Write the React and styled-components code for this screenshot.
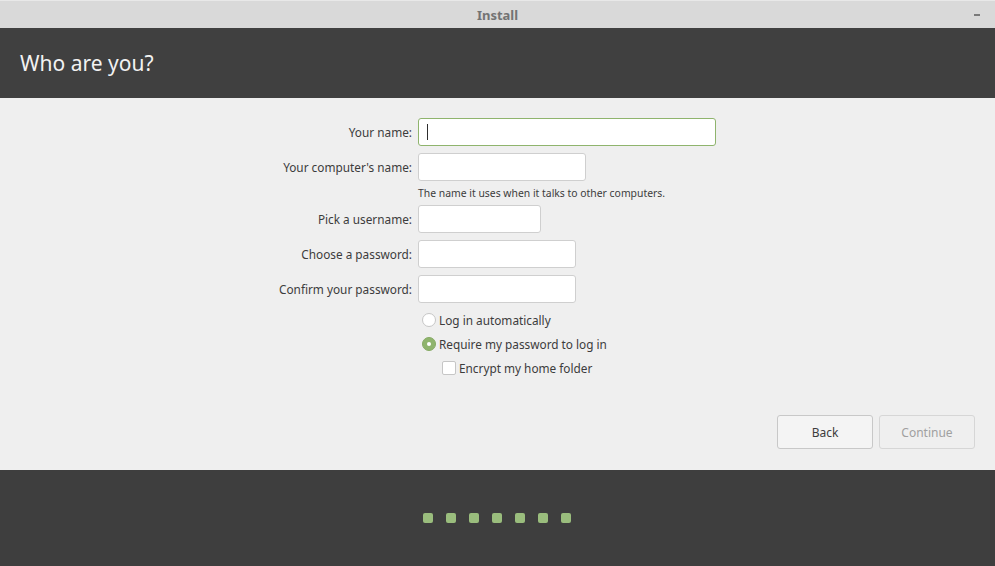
import React from "react";
import styled, { createGlobalStyle } from "styled-components";

const GlobalStyle = createGlobalStyle`
  html, body {
    margin: 0;
    padding: 0;
    background: #efefef;
    font-family: "Noto Sans", "DejaVu Sans", sans-serif;
  }
`;

const Window = styled.div`
  width: 995px;
  height: 566px;
  display: flex;
  flex-direction: column;
  overflow: hidden;
`;

const TitleBar = styled.div`
  height: 28px;
  flex: none;
  background: #d9d9d9;
  border-top: 1px solid #e8e8e8;
  box-sizing: border-box;
  display: flex;
  align-items: center;
  justify-content: center;
  position: relative;
  color: #737373;
  font-weight: 700;
  font-size: 13px;
`;

const Minimize = styled.span`
  position: absolute;
  right: 15px;
  top: 13px;
  width: 6px;
  height: 2px;
  background: #7a7a7a;
`;

const Header = styled.div`
  height: 70px;
  flex: none;
  background: #404040;
  display: flex;
  align-items: center;
  padding: 0 20px;
  color: #f2f2f2;
  font-size: 21px;
`;

const Body = styled.div`
  flex: 1;
  background: #efefef;
  display: flex;
  flex-direction: column;
  justify-content: space-between;
  padding: 20px 20px 21px 0;
`;

const Form = styled.div`
  display: grid;
  grid-template-columns: 412px auto;
  column-gap: 6px;
  row-gap: 7px;
  align-items: center;
  justify-items: start;
`;

const Label = styled.label`
  justify-self: end;
  font-size: 11.8px;
  color: #3c3c3c;
`;

const Input = styled.div`
  box-sizing: border-box;
  height: 28px;
  width: ${({ w }) => w}px;
  background: #fff;
  border: 1px solid ${({ focused }) => (focused ? "#8fb46d" : "#cfcfcf")};
  border-radius: 3px;
  display: flex;
  align-items: center;
  padding-left: 8px;
`;

const Caret = styled.span`
  width: 1px;
  height: 16px;
  background: #2e2e2e;
`;

const Hint = styled.div`
  grid-column: 2;
  font-size: 10.4px;
  line-height: 16px;
  margin: -3px 0;
  color: #3c3c3c;
`;

const Options = styled.div`
  grid-column: 2;
  display: flex;
  flex-direction: column;
  gap: 4px;
`;

const Option = styled.div`
  height: 20px;
  display: flex;
  align-items: center;
  gap: 3px;
  padding-left: ${({ indent }) => (indent ? 24 : 4)}px;
  font-size: 11.8px;
  color: #3c3c3c;
`;

const Radio = styled.span`
  box-sizing: border-box;
  width: 14px;
  height: 14px;
  border-radius: 50%;
  background: ${({ checked }) => (checked ? "#8fb46d" : "#fff")};
  border: 1px solid ${({ checked }) => (checked ? "#85aa63" : "#c6c6c6")};
  display: flex;
  align-items: center;
  justify-content: center;
  &::after {
    content: "";
    display: ${({ checked }) => (checked ? "block" : "none")};
    width: 4px;
    height: 4px;
    border-radius: 50%;
    background: #fff;
  }
`;

const Checkbox = styled.span`
  box-sizing: border-box;
  width: 14px;
  height: 14px;
  border-radius: 2px;
  background: #fff;
  border: 1px solid #c6c6c6;
`;

const Buttons = styled.div`
  display: flex;
  justify-content: flex-end;
  gap: 6px;
`;

const Button = styled.button`
  box-sizing: border-box;
  width: 96px;
  height: 34px;
  border: 1px solid ${({ disabled }) => (disabled ? "#d6d6d6" : "#c8c8c8")};
  border-radius: 3px;
  background: ${({ disabled }) => (disabled ? "#efefef" : "#f4f4f4")};
  color: ${({ disabled }) => (disabled ? "#a0a0a0" : "#3c3c3c")};
  font-family: "Noto Sans", sans-serif;
  font-size: 12px;
  padding: 0;
`;

const Footer = styled.div`
  height: 96px;
  flex: none;
  background: #3e3e3e;
  display: flex;
  align-items: center;
  justify-content: center;
  gap: 13px;
  padding-right: 2px;
`;

const Dot = styled.span`
  width: 10px;
  height: 10px;
  border-radius: 2px;
  background: #9abd7d;
`;

export default function App() {
  return (
    <Window>
      <GlobalStyle />
      <TitleBar>
        Install
        <Minimize />
      </TitleBar>
      <Header>Who are you?</Header>
      <Body>
        <Form>
          <Label>Your name:</Label>
          <Input w={298} focused>
            <Caret />
          </Input>
          <Label>Your computer's name:</Label>
          <Input w={168} />
          <Hint>The name it uses when it talks to other computers.</Hint>
          <Label>Pick a username:</Label>
          <Input w={123} />
          <Label>Choose a password:</Label>
          <Input w={158} />
          <Label>Confirm your password:</Label>
          <Input w={158} />
          <Options>
            <Option>
              <Radio />
              Log in automatically
            </Option>
            <Option>
              <Radio checked />
              Require my password to log in
            </Option>
            <Option indent>
              <Checkbox />
              Encrypt my home folder
            </Option>
          </Options>
        </Form>
        <Buttons>
          <Button>Back</Button>
          <Button disabled>Continue</Button>
        </Buttons>
      </Body>
      <Footer>
        {Array.from({ length: 7 }).map((_, i) => (
          <Dot key={i} />
        ))}
      </Footer>
    </Window>
  );
}
